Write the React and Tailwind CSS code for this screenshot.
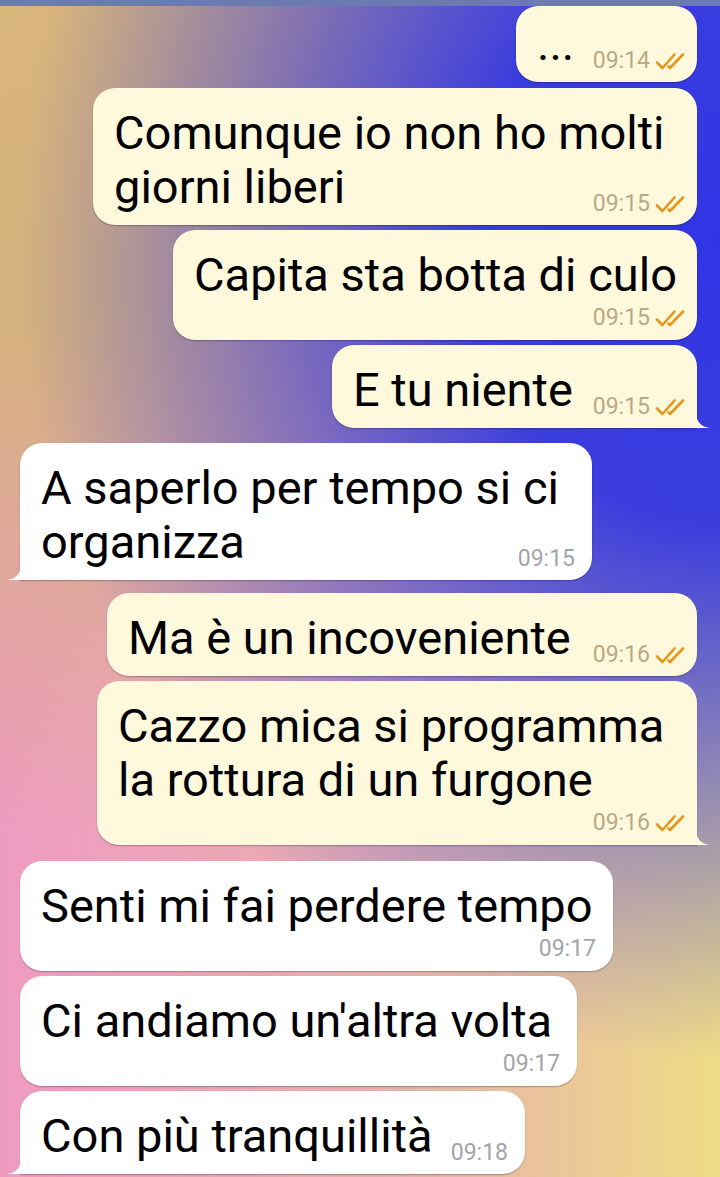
import React from 'react';

const messages = [
  { out: true, lines: ['...'], time: '09:14', w: 'w-[181px]', first: true },
  { out: true, lines: ['Comunque io non ho molti', 'giorni liberi'], time: '09:15', w: 'w-[604px]', mt: 'mt-[6px]' },
  { out: true, lines: ['Capita sta botta di culo'], time: '09:15', w: 'w-[524px]', below: true, mt: 'mt-[5px]' },
  { out: true, lines: ['E tu niente'], time: '09:15', w: 'w-[365px]', tail: true, mt: 'mt-[5px]' },
  { out: false, lines: ['A saperlo per tempo si ci', 'organizza'], time: '09:15', w: 'w-[572px]', tail: true, mt: 'mt-[15px]' },
  { out: true, lines: ['Ma è un incoveniente'], time: '09:16', w: 'w-[590px]', mt: 'mt-[13px]' },
  { out: true, lines: ['Cazzo mica si programma', 'la rottura di un furgone'], time: '09:16', w: 'w-[600px]', below: true, tail: true, mt: 'mt-[5px]' },
  { out: false, lines: ['Senti mi fai perdere tempo'], time: '09:17', w: 'w-[593px]', below: true, mt: 'mt-[16px]' },
  { out: false, lines: ["Ci andiamo un'altra volta"], time: '09:17', w: 'w-[557px]', below: true, mt: 'mt-[5px]' },
  { out: false, lines: ['Con più tranquillità'], time: '09:18', w: 'w-[505px]', tail: true, mt: 'mt-[5px]' },
];

const Checks = () => (
  <svg width="32" height="18" viewBox="0 0 32 18" fill="none" stroke="#e8951c" strokeWidth="2.6" strokeLinecap="round" strokeLinejoin="round">
    <path d="M2 10.5 L7.5 16 L19.5 2.5" />
    <path d="M13.5 14.5 L15 16 L28 2.5" />
  </svg>
);

const Time = ({ t, out, className = '' }) => (
  <span className={`flex items-center gap-[5px] text-[23px] leading-[26px] whitespace-nowrap ${className}`}>
    <span className={out ? 'text-[#baa984]' : 'text-[#a2a5a9]'}>{t}</span>
    {out && <Checks />}
  </span>
);

const Tail = ({ out, color }) => (
  <svg
    width="14"
    height="16"
    viewBox="0 0 14 16"
    className={out ? 'absolute bottom-0 right-[-13px]' : 'absolute bottom-0 left-[-13px] -scale-x-100'}
  >
    <path d="M0 0 C0 9 4 14.5 14 16 L0 16 Z" fill={color} />
  </svg>
);

const Bubble = ({ m }) => {
  const bg = m.out ? 'bg-[#fef9dd]' : 'bg-white';
  const corners = m.tail ? (m.out ? 'rounded-[22px] rounded-br-none' : 'rounded-[22px] rounded-bl-none') : 'rounded-[22px]';
  const pad = m.out ? 'pr-[10px]' : 'pr-[17px]';
  const last = m.lines[m.lines.length - 1];
  const rest = m.lines.slice(0, -1);
  return (
    <div
      className={`relative ${m.w} ${bg} ${corners} ${pad} pl-[21px] ${m.first ? 'pt-[11px]' : 'pt-[18px]'} ${m.below ? 'pb-[9px]' : 'pb-[11px]'} ${m.mt || ''} shadow-[0_1px_1.5px_rgba(0,0,0,0.28)] text-black text-[47px] leading-[54px]`}
    >
      {rest.map((l, i) => (
        <div key={i} className="whitespace-nowrap">{l}</div>
      ))}
      {m.below ? (
        <>
          <div className="whitespace-nowrap">{last}</div>
          <div className="flex justify-end mt-[3px]">
            <Time t={m.time} out={m.out} />
          </div>
        </>
      ) : (
        <div className="flex items-end justify-between">
          <span className="whitespace-nowrap">{last}</span>
          <Time t={m.time} out={m.out} className="-mb-[3px] ml-[18px]" />
        </div>
      )}
      {m.tail && <Tail out={m.out} color={m.out ? '#fef9dd' : '#ffffff'} />}
    </div>
  );
};

export default function App() {
  return (
    <div className="w-full h-[1177px] overflow-hidden font-['Roboto',sans-serif] bg-[#e2aeb0] bg-[radial-gradient(ellipse_700px_820px_at_720px_240px,rgba(48,52,228,1)_0%,rgba(50,54,226,0.95)_35%,rgba(60,62,220,0)_100%),radial-gradient(ellipse_880px_840px_at_0px_0px,#d9b67a_0%,#d5b17f_40%,rgba(214,178,126,0)_100%),linear-gradient(to_right,#ef9bc1_0%,#e6b1ad_55%,#efdb86_100%)]">
      <div className="h-[6px] bg-[#6b7bb1]" />
      <div className="flex flex-col">
        {messages.map((m, i) => (
          <div key={i} className={m.out ? 'flex justify-end pr-[23px]' : 'flex justify-start pl-[20px]'}>
            <Bubble m={m} />
          </div>
        ))}
      </div>
    </div>
  );
}
